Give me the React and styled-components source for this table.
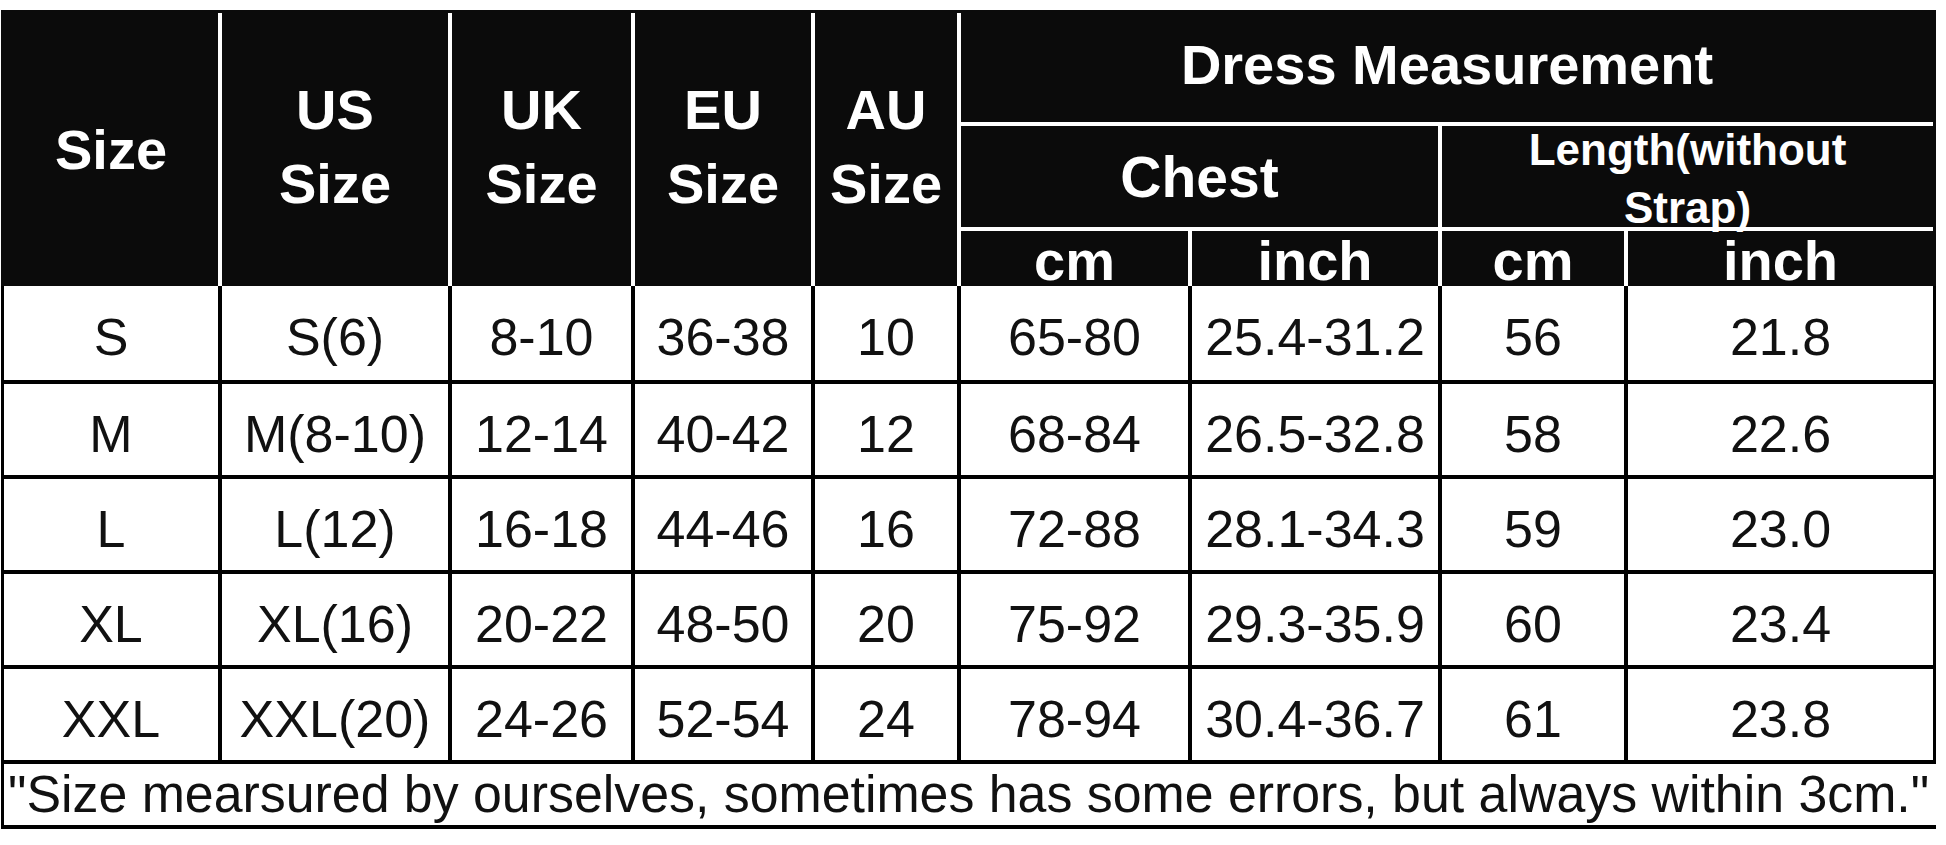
import React from "react";
import styled, { createGlobalStyle } from "styled-components";

const GlobalStyle = createGlobalStyle`
  html, body {
    margin: 0;
    padding: 0;
    background: #ffffff;
  }
  body {
    font-family: "Liberation Sans", Arial, sans-serif;
  }
`;

const COLS = "214px 226px 179px 176px 142px 227px 246px 182px 305px";

const Page = styled.div`
  width: 1946px;
  height: 845px;
  box-sizing: border-box;
  padding: 10px 0 0 1px;
  background: #ffffff;
`;

const Chart = styled.div`
  width: 1935px;
`;

const Header = styled.div`
  display: grid;
  grid-template-columns: ${COLS};
  grid-template-rows: 109px 101px 55px;
  gap: 4px;
  background: #ffffff;
  border: 3px solid #0b0b0b;
  border-bottom: 0;
`;

const HeadCell = styled.div`
  grid-column: ${(p) => p.$col};
  grid-row: ${(p) => p.$row};
  display: flex;
  align-items: center;
  justify-content: center;
  text-align: center;
  box-sizing: border-box;
  background: #0b0b0b;
  color: #ffffff;
  font-weight: 700;
  font-size: ${(p) => p.$size || 56}px;
  line-height: ${(p) => p.$lh || "normal"};
  padding: ${(p) => p.$pad || "0"};
  white-space: nowrap;
  position: ${(p) => (p.$over ? "relative" : "static")};
  z-index: ${(p) => (p.$over ? 1 : "auto")};
`;

const Body = styled.div`
  display: grid;
  grid-template-columns: ${COLS};
  grid-template-rows: 94px repeat(4, 91px);
  gap: 4px;
  background: #000000;
  padding: 0 3px 4px 3px;
`;

const Cell = styled.div`
  display: flex;
  align-items: center;
  justify-content: center;
  box-sizing: border-box;
  padding-top: 8px;
  background: #ffffff;
  color: #111111;
  font-size: 52px;
  white-space: nowrap;
`;

const Note = styled.div`
  height: 61px;
  box-sizing: content-box;
  border-left: 3px solid #000000;
  border-bottom: 4px solid #000000;
  padding-left: 4px;
  color: #111111;
  font-size: 51.85px;
  line-height: 61px;
  white-space: nowrap;
`;

const rows = [
  ["S", "S(6)", "8-10", "36-38", "10", "65-80", "25.4-31.2", "56", "21.8"],
  ["M", "M(8-10)", "12-14", "40-42", "12", "68-84", "26.5-32.8", "58", "22.6"],
  ["L", "L(12)", "16-18", "44-46", "16", "72-88", "28.1-34.3", "59", "23.0"],
  ["XL", "XL(16)", "20-22", "48-50", "20", "75-92", "29.3-35.9", "60", "23.4"],
  ["XXL", "XXL(20)", "24-26", "52-54", "24", "78-94", "30.4-36.7", "61", "23.8"],
];

const sizeHeads = ["US", "UK", "EU", "AU"];

export default function App() {
  return (
    <>
      <GlobalStyle />
      <Page>
        <Chart>
          <Header>
            <HeadCell $col="1" $row="1 / 4">
              Size
            </HeadCell>
            {sizeHeads.map((h, i) => (
              <HeadCell key={h} $col={`${i + 2}`} $row="1 / 4" $lh="74px" $pad="0 0 6px 0">
                {h}
                <br />
                Size
              </HeadCell>
            ))}
            <HeadCell $col="6 / 10" $row="1" $pad="0 0 7px 0">
              Dress Measurement
            </HeadCell>
            <HeadCell $col="6 / 8" $row="2" $size={57}>
              Chest
            </HeadCell>
            <HeadCell $col="8 / 10" $row="2" $size={44} $lh="58px" $pad="4px 0 0 0" $over>
              Length(without
              <br />
              Strap)
            </HeadCell>
            <HeadCell $col="6" $row="3" $pad="4px 0 0 0">
              cm
            </HeadCell>
            <HeadCell $col="7" $row="3" $pad="4px 0 0 0">
              inch
            </HeadCell>
            <HeadCell $col="8" $row="3" $pad="4px 0 0 0">
              cm
            </HeadCell>
            <HeadCell $col="9" $row="3" $pad="4px 0 0 0">
              inch
            </HeadCell>
          </Header>
          <Body>
            {rows.map((r) =>
              r.map((v, i) => <Cell key={`${r[0]}-${i}`}>{v}</Cell>)
            )}
          </Body>
          <Note>
            "Size mearsured by ourselves, sometimes has some errors, but always within 3cm."
          </Note>
        </Chart>
      </Page>
    </>
  );
}
